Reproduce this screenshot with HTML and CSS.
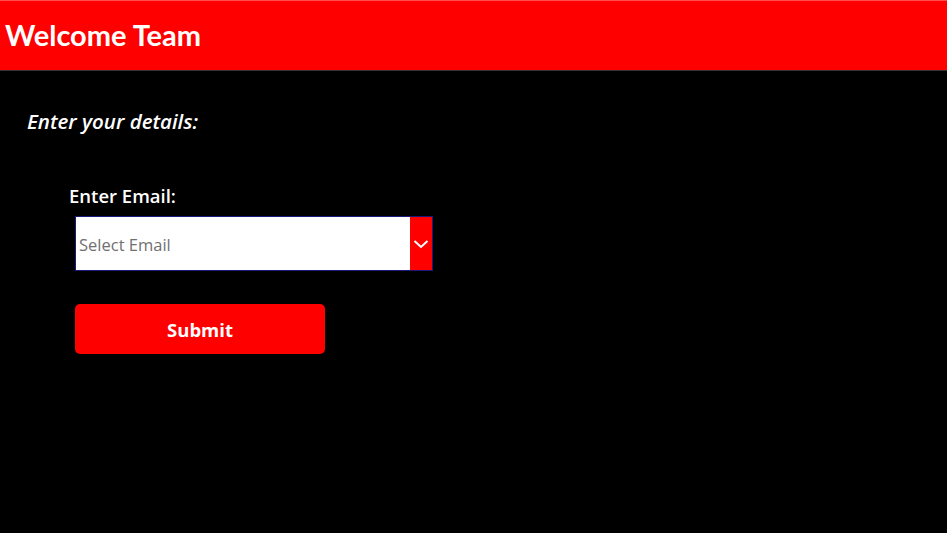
FILE: index.html
```html
<!DOCTYPE html>
<html>
<head>
<meta charset="utf-8">
<link rel="stylesheet" href="styles.css">
</head>
<body>
<header class="topbar"><h1 class="title">Welcome Team</h1></header>
<main class="content">
  <p class="intro">Enter your details:</p>
  <div class="field">
    <label class="label">Enter Email:</label>
    <div class="select">
      <span class="placeholder">Select Email</span>
      <span class="arrow">
        <svg width="16" height="10" viewBox="0 0 16 10"><path d="M1.5 2 L8 8 L14.5 2" fill="none" stroke="#fff" stroke-width="2"/></svg>
      </span>
    </div>
    <button class="submit">Submit</button>
  </div>
</main>
</body>
</html>
```
FILE: styles.css
```css
* { box-sizing: border-box; }
html, body { margin: 0; padding: 0; background: #000; height: 100%; }
body { font-family: "Open Sans", sans-serif; color: #fff; }
.topbar {
  height: 71px;
  background: #ff0000;
  border-top: 1px solid #ff4d4d;
  border-bottom: 1px solid #333;
  display: flex;
  align-items: center;
  padding-left: 5px;
  padding-bottom: 2px;
}
.title {
  margin: 0;
  font-family: Lato, sans-serif;
  font-weight: 700;
  font-size: 29px;
  line-height: 1;
}
.content { padding: 0 0 0 27px; }
.intro {
  margin: 36px 0 0 0;
  font-style: italic;
  font-weight: 600;
  font-size: 20.5px;
  line-height: 28px;
}
.field { padding-left: 42px; margin-top: 49px; display: flex; flex-direction: column; align-items: flex-start; }
.label {
  font-weight: 600;
  font-size: 18.5px;
  line-height: 24px;
}
.select {
  margin-top: 8px;
  margin-left: 6px;
  width: 358px;
  height: 55px;
  background: #fff;
  border: 1px solid #1a1a7a;
  display: flex;
  align-items: center;
}
.placeholder {
  flex: 1;
  padding-left: 3px;
  padding-top: 1px;
  color: #707070;
  font-size: 16.5px;
}
.arrow {
  width: 22px;
  height: 100%;
  background: #ff0000;
  display: flex;
  align-items: center;
  justify-content: center;
}
.submit {
  margin-top: 33px;
  margin-left: 6px;
  width: 250px;
  height: 50px;
  background: #ff0000;
  border: none;
  border-radius: 5px;
  color: #fff;
  font-family: "Open Sans", sans-serif;
  font-weight: 700;
  font-size: 18.5px;
  padding: 0;
}
```
